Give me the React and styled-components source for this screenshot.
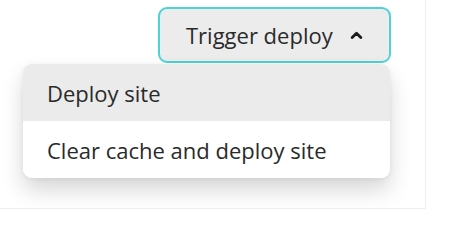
import React from "react";
import styled, { createGlobalStyle } from "styled-components";

const Global = createGlobalStyle`
  html, body { margin: 0; padding: 0; background: #ffffff; }
  body { font-family: "Open Sans", "Noto Sans", sans-serif; }
`;

const Panel = styled.div`
  position: relative;
  width: 425px;
  height: 208px;
  border-right: 1px solid #eeeeee;
  border-bottom: 1px solid #eeeeee;
  box-sizing: content-box;
`;

const Header = styled.div`
  display: flex;
  justify-content: flex-end;
  padding: 7px 34px 0 0;
`;

const DropdownWrap = styled.div`
  position: relative;
`;

const TriggerButton = styled.button`
  display: flex;
  align-items: center;
  gap: 17px;
  box-sizing: border-box;
  height: 56px;
  width: 233px;
  padding: 0 0 0 26px;
  border: 2px solid #4dd3d6;
  border-radius: 9px;
  background: #ececec;
  color: #2a2a2a;
  font-family: "Open Sans", "Noto Sans", sans-serif;
  font-size: 22px;
  white-space: nowrap;
  cursor: pointer;
`;

const Menu = styled.ul`
  position: absolute;
  top: 57px;
  right: 1px;
  width: 367px;
  margin: 0;
  padding: 0;
  list-style: none;
  background: #ffffff;
  border-radius: 9px;
  overflow: hidden;
  box-shadow: 0 12px 22px rgba(0, 0, 0, 0.16), 0 1px 5px rgba(0, 0, 0, 0.06);
`;

const MenuItem = styled.li`
  display: flex;
  align-items: center;
  height: 57px;
  padding: 0 24px;
  background: ${(p) => (p.$active ? "#ebebeb" : "#ffffff")};
  color: #2a2a2a;
  font-size: 22px;
  white-space: nowrap;
`;

const Chevron = () => (
  <svg width="13" height="8" viewBox="0 0 13 8" aria-hidden="true">
    <path d="M2.2 6.4 L6.5 2.2 L10.8 6.4" fill="none" stroke="#1a1a1a" strokeWidth="2.8" strokeLinecap="round" strokeLinejoin="round" />
  </svg>
);

export default function App() {
  return (
    <>
      <Global />
      <Panel>
        <Header>
          <DropdownWrap>
            <TriggerButton>
              Trigger deploy
              <Chevron />
            </TriggerButton>
            <Menu>
              <MenuItem $active>Deploy site</MenuItem>
              <MenuItem>Clear cache and deploy site</MenuItem>
            </Menu>
          </DropdownWrap>
        </Header>
      </Panel>
    </>
  );
}
